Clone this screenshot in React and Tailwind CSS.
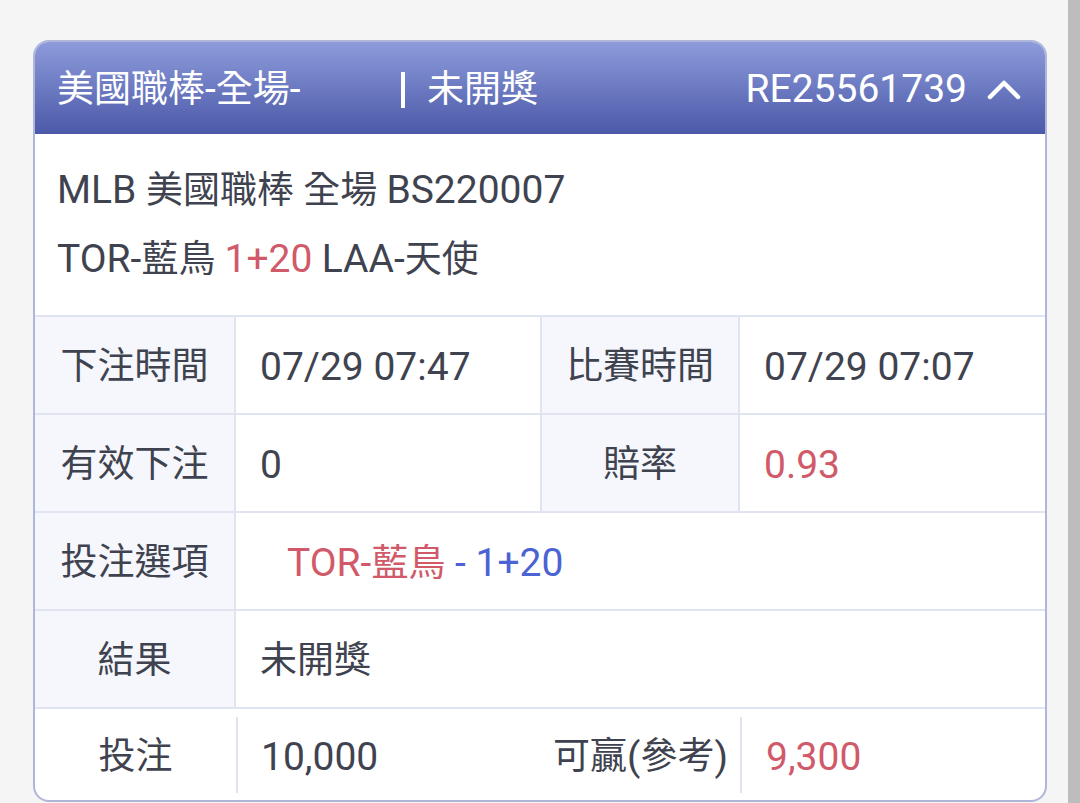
import React from "react";

const font = { fontFamily: 'Roboto, "Noto Sans CJK TC", "Noto Sans", sans-serif' };

function L({ children, className = "" }) {
  return <span className={`text-[39px] ${className}`}>{children}</span>;
}

function Chevron() {
  return (
    <svg width="34" height="20" viewBox="0 0 34 20" fill="none">
      <path d="M3 17 L17 3 L31 17" stroke="white" strokeWidth="4.5" strokeLinecap="round" strokeLinejoin="round" />
    </svg>
  );
}

function Label({ children, right }) {
  return (
    <div className={`flex items-center justify-center pt-[4px] bg-[#f5f7fc] border-r-2 border-[#e0e4f0] ${right ? "border-l-2" : ""}`}>
      {children}
    </div>
  );
}

export default function App() {
  return (
    <div className="flex min-h-[803px] bg-[#f5f5f5] text-[#3f434f]" style={font}>
      <div className="flex-1 pl-[33px] pr-[21px] pt-[40px]">
        <div className="w-[1014px] h-[762px] rounded-[16px] border-2 border-[#b0b6da] bg-white overflow-hidden flex flex-col">
          <div className="h-[92px] shrink-0 bg-gradient-to-b from-[#8e9bdb] to-[#4c59a8] flex items-center pt-[3px] pl-[22px] pr-[24px] text-white text-[37px]">
            <span className="w-[344px]">美國職棒<L>-</L>全場<L>-</L></span>
            <span className="w-[4px] h-[36px] bg-white"></span>
            <span className="ml-[22px]">未開獎</span>
            <L className="ml-auto">RE25561739</L>
            <span className="ml-[20px] flex items-center"><Chevron /></span>
          </div>
          <div className="h-[181px] shrink-0 px-[22px] pt-[22px] text-[37px] leading-[68px]">
            <div><L>MLB </L>美國職棒 全場 <L>BS220007</L></div>
            <div>
              <L>TOR-</L>藍鳥 <L className="text-[#d05a69]">1+20</L> <L>LAA-</L>天使
            </div>
          </div>
          <div className="grid grid-cols-[201px_304px_200px_1fr] text-[37px]">
            <div className="col-span-4 grid grid-cols-subgrid h-[98px] border-t-2 border-[#e0e4f0]">
              <Label>下注時間</Label>
              <div className="flex items-center pt-[4px] pl-[24px]"><L>07/29 07:47</L></div>
              <Label right>比賽時間</Label>
              <div className="flex items-center pt-[4px] pl-[24px]"><L>07/29 07:07</L></div>
            </div>
            <div className="col-span-4 grid grid-cols-subgrid h-[98px] border-t-2 border-[#e0e4f0]">
              <Label>有效下注</Label>
              <div className="flex items-center pt-[4px] pl-[24px]"><L>0</L></div>
              <Label right>賠率</Label>
              <div className="flex items-center pt-[4px] pl-[24px] text-[#d05a69]"><L>0.93</L></div>
            </div>
            <div className="col-span-4 grid grid-cols-subgrid h-[98px] border-t-2 border-[#e0e4f0]">
              <Label>投注選項</Label>
              <div className="col-span-3 flex items-center pt-[4px] pl-[51px]">
                <span className="text-[#d05a69]"><L>TOR-</L>藍鳥</span>
                <L className="text-[#4b63d3] whitespace-pre"> - 1+20</L>
              </div>
            </div>
            <div className="col-span-4 grid grid-cols-subgrid h-[98px] border-t-2 border-[#e0e4f0]">
              <Label>結果</Label>
              <div className="col-span-3 flex items-center pt-[4px] pl-[24px]">未開獎</div>
            </div>
            <div className="col-span-4 grid grid-cols-subgrid h-[94px] border-t-2 border-[#e0e4f0]">
              <div className="flex items-center justify-center pt-[4px]">投注</div>
              <div className="flex items-center">
                <span className="w-[2px] h-[76px] bg-[#e0e4f0]"></span>
                <L className="pl-[23px] pt-[4px]">10,000</L>
              </div>
              <div className="flex items-center justify-end pr-[12px] pt-[4px]">可贏<L>(</L>參考<L>)</L></div>
              <div className="flex items-center">
                <span className="w-[2px] h-[76px] bg-[#e0e4f0]"></span>
                <L className="pl-[24px] pt-[4px] text-[#d05a69]">9,300</L>
              </div>
            </div>
          </div>
        </div>
      </div>
      <div className="w-[12px] bg-[#bdbdbd]"></div>
    </div>
  );
}
